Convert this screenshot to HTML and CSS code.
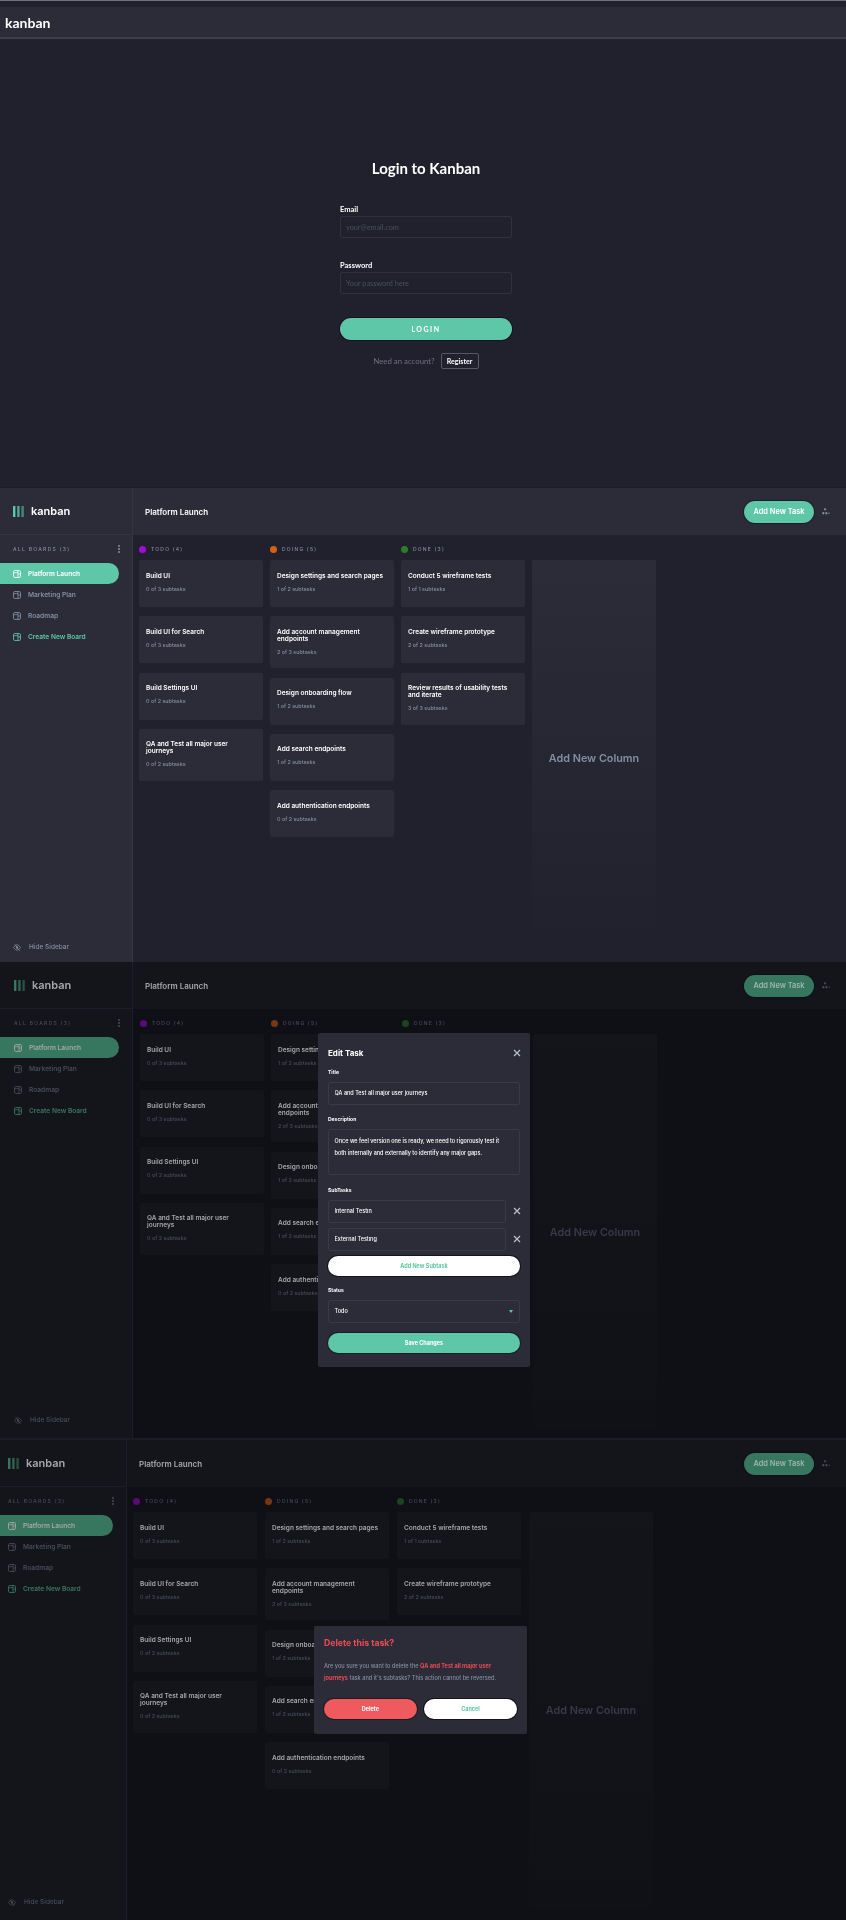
FILE: index.html
```html
<!DOCTYPE html>
<html lang="en">
<head>
  <meta charset="UTF-8">
  <meta name="viewport" content="width=device-width, initial-scale=1">
  <title>Kanban</title>
  <link rel="stylesheet" href="styles.css">
</head>
<body>
  <svg class="defs" width="0" height="0">
    <symbol id="board-icon" viewBox="0 0 9 9">
      <rect x=".6" y=".6" width="7.8" height="7.8" rx="1.4" fill="none" stroke="currentColor" stroke-width="1"/>
      <path d="M5.600 .6v7.800M5.600 4.500h2.800M.6 3h5" fill="none" stroke="currentColor" stroke-width=".9"/>
    </symbol>
    <symbol id="logo-bars" viewBox="0 0 11 11">
      <rect width="2.400" height="11" rx=".3" fill="currentColor"/>
      <rect x="4.200" width="2.400" height="11" rx=".3" fill="currentColor" opacity=".8"/>
      <rect x="8.400" width="2.400" height="11" rx=".3" fill="currentColor" opacity=".6"/>
    </symbol>
    <symbol id="hide-icon" viewBox="0 0 9 8">
      <path d="M.5 4C2 1.800 3.200 1 4.500 1S7 1.800 8.500 4C7 6.200 5.800 7 4.500 7S2 6.200 .5 4Z" fill="none" stroke="currentColor" stroke-width=".9"/>
      <circle cx="4.500" cy="4" r="1.300" fill="currentColor"/>
      <path d="M1.800 .4l5.600 7.200" stroke="currentColor" stroke-width=".9"/>
    </symbol>
    <symbol id="user-icon" viewBox="0 0 9 8">
      <circle cx="3.400" cy="1.500" r="1.300" fill="currentColor"/>
      <circle cx="1.400" cy="6" r="1.300" fill="currentColor"/>
      <circle cx="4.900" cy="6" r="1.300" fill="currentColor"/>
      <circle cx="8" cy="6" r=".8" fill="currentColor"/>
    </symbol>
    <symbol id="close-icon" viewBox="0 0 8 8">
      <path d="M1 1l6 6M7 1L1 7" fill="none" stroke="currentColor" stroke-width="1.200"/>
    </symbol>
  </svg>

  <!-- login -->
  <section class="login">
    <header class="login-bar"><span class="login-logo">kanban</span></header>
    <div class="login-body">
      <h1 class="login-title">Login to Kanban</h1>
      <label class="login-label">Email</label>
      <input class="login-input" type="text" placeholder="your@email.com">
      <label class="login-label login-label-next">Password</label>
      <input class="login-input" type="text" placeholder="Your password here">
      <button class="login-btn">LOGIN</button>
      <div class="login-foot">
        <span>Need an account?</span>
        <button class="register-btn">Register</button>
      </div>
    </div>
  </section>

  <!-- board -->
  <section class="board board-plain">
    <aside class="sidebar">
      <div class="brand"><svg class="brand-bars"><use href="#logo-bars"/></svg><span>kanban</span></div>
      <div class="boards-head"><span>ALL BOARDS (3)</span><i class="dots"></i></div>
      <nav class="boards">
        <a class="board-link active"><svg><use href="#board-icon"/></svg>Platform Launch</a>
        <a class="board-link"><svg><use href="#board-icon"/></svg>Marketing Plan</a>
        <a class="board-link"><svg><use href="#board-icon"/></svg>Roadmap</a>
        <a class="board-link create"><svg><use href="#board-icon"/></svg>Create New Board</a>
      </nav>
      <a class="hide-link"><svg><use href="#hide-icon"/></svg>Hide Sidebar</a>
    </aside>
    <div class="main">
      <header class="topbar">
        <h2>Platform Launch</h2>
        <button class="add-task">Add New Task</button>
        <svg class="user-icon"><use href="#user-icon"/></svg>
      </header>
      <div class="columns">
        <div class="column">
          <h3 class="column-head"><i class="dot todo"></i>TODO (4)</h3>
          <div class="card"><h4>Build UI</h4><p>0 of 3 subtasks</p></div>
          <div class="card"><h4>Build UI for Search</h4><p>0 of 3 subtasks</p></div>
          <div class="card"><h4>Build Settings UI</h4><p>0 of 2 subtasks</p></div>
          <div class="card"><h4>QA and Test all major user journeys</h4><p>0 of 2 subtasks</p></div>
        </div>
        <div class="column">
          <h3 class="column-head"><i class="dot doing"></i>DOING (5)</h3>
          <div class="card"><h4>Design settings and search pages</h4><p>1 of 2 subtasks</p></div>
          <div class="card"><h4>Add account management endpoints</h4><p>2 of 3 subtasks</p></div>
          <div class="card"><h4>Design onboarding flow</h4><p>1 of 2 subtasks</p></div>
          <div class="card"><h4>Add search endpoints</h4><p>1 of 2 subtasks</p></div>
          <div class="card"><h4>Add authentication endpoints</h4><p>0 of 2 subtasks</p></div>
        </div>
        <div class="column">
          <h3 class="column-head"><i class="dot done"></i>DONE (3)</h3>
          <div class="card"><h4>Conduct 5 wireframe tests</h4><p>1 of 1 subtasks</p></div>
          <div class="card"><h4>Create wireframe prototype</h4><p>2 of 2 subtasks</p></div>
          <div class="card"><h4>Review results of usability tests and iterate</h4><p>3 of 3 subtasks</p></div>
        </div>
        <div class="add-column">Add New Column</div>
      </div>
    </div>
  </section>

  <!-- edit task modal -->
  <section class="board board-edit dim">
    <aside class="sidebar">
      <div class="brand"><svg class="brand-bars"><use href="#logo-bars"/></svg><span>kanban</span></div>
      <div class="boards-head"><span>ALL BOARDS (3)</span><i class="dots"></i></div>
      <nav class="boards">
        <a class="board-link active"><svg><use href="#board-icon"/></svg>Platform Launch</a>
        <a class="board-link"><svg><use href="#board-icon"/></svg>Marketing Plan</a>
        <a class="board-link"><svg><use href="#board-icon"/></svg>Roadmap</a>
        <a class="board-link create"><svg><use href="#board-icon"/></svg>Create New Board</a>
      </nav>
      <a class="hide-link"><svg><use href="#hide-icon"/></svg>Hide Sidebar</a>
    </aside>
    <div class="main">
      <header class="topbar">
        <h2>Platform Launch</h2>
        <button class="add-task">Add New Task</button>
        <svg class="user-icon"><use href="#user-icon"/></svg>
      </header>
      <div class="columns">
        <div class="column">
          <h3 class="column-head"><i class="dot todo"></i>TODO (4)</h3>
          <div class="card"><h4>Build UI</h4><p>0 of 3 subtasks</p></div>
          <div class="card"><h4>Build UI for Search</h4><p>0 of 3 subtasks</p></div>
          <div class="card"><h4>Build Settings UI</h4><p>0 of 2 subtasks</p></div>
          <div class="card"><h4>QA and Test all major user journeys</h4><p>0 of 2 subtasks</p></div>
        </div>
        <div class="column">
          <h3 class="column-head"><i class="dot doing"></i>DOING (5)</h3>
          <div class="card"><h4>Design settings and search pages</h4><p>1 of 2 subtasks</p></div>
          <div class="card"><h4>Add account management endpoints</h4><p>2 of 3 subtasks</p></div>
          <div class="card"><h4>Design onboarding flow</h4><p>1 of 2 subtasks</p></div>
          <div class="card"><h4>Add search endpoints</h4><p>1 of 2 subtasks</p></div>
          <div class="card"><h4>Add authentication endpoints</h4><p>0 of 2 subtasks</p></div>
        </div>
        <div class="column">
          <h3 class="column-head"><i class="dot done"></i>DONE (3)</h3>
        </div>
        <div class="add-column">Add New Column</div>
      </div>
    </div>
    <form class="modal edit-modal">
      <div class="modal-head">
        <h3>Edit Task</h3>
        <svg class="close"><use href="#close-icon"/></svg>
      </div>
      <label class="field-label">Title</label>
      <input class="field" type="text" value="QA and Test all major user journeys">
      <label class="field-label">Description</label>
      <textarea class="field field-area">Once we feel version one is ready, we need to rigorously test it
both internally and externally to identify any major gaps.</textarea>
      <label class="field-label">SubTasks</label>
      <div class="subtask">
        <input class="field" type="text" value="Internal Testin">
        <svg class="close"><use href="#close-icon"/></svg>
      </div>
      <div class="subtask">
        <input class="field" type="text" value="External Testing">
        <svg class="close"><use href="#close-icon"/></svg>
      </div>
      <button class="pill pill-white" type="button">Add New Subtask</button>
      <label class="field-label">Status</label>
      <div class="select">
        <span>Todo</span>
        <i class="chevron"></i>
      </div>
      <button class="pill pill-green" type="button">Save Changes</button>
    </form>
  </section>

  <!-- delete task modal -->
  <section class="board board-delete dim">
    <aside class="sidebar">
      <div class="brand"><svg class="brand-bars"><use href="#logo-bars"/></svg><span>kanban</span></div>
      <div class="boards-head"><span>ALL BOARDS (3)</span><i class="dots"></i></div>
      <nav class="boards">
        <a class="board-link active"><svg><use href="#board-icon"/></svg>Platform Launch</a>
        <a class="board-link"><svg><use href="#board-icon"/></svg>Marketing Plan</a>
        <a class="board-link"><svg><use href="#board-icon"/></svg>Roadmap</a>
        <a class="board-link create"><svg><use href="#board-icon"/></svg>Create New Board</a>
      </nav>
      <a class="hide-link"><svg><use href="#hide-icon"/></svg>Hide Sidebar</a>
    </aside>
    <div class="main">
      <header class="topbar">
        <h2>Platform Launch</h2>
        <button class="add-task">Add New Task</button>
        <svg class="user-icon"><use href="#user-icon"/></svg>
      </header>
      <div class="columns">
        <div class="column">
          <h3 class="column-head"><i class="dot todo"></i>TODO (4)</h3>
          <div class="card"><h4>Build UI</h4><p>0 of 3 subtasks</p></div>
          <div class="card"><h4>Build UI for Search</h4><p>0 of 3 subtasks</p></div>
          <div class="card"><h4>Build Settings UI</h4><p>0 of 2 subtasks</p></div>
          <div class="card"><h4>QA and Test all major user journeys</h4><p>0 of 2 subtasks</p></div>
        </div>
        <div class="column">
          <h3 class="column-head"><i class="dot doing"></i>DOING (5)</h3>
          <div class="card"><h4>Design settings and search pages</h4><p>1 of 2 subtasks</p></div>
          <div class="card"><h4>Add account management endpoints</h4><p>2 of 3 subtasks</p></div>
          <div class="card"><h4>Design onboarding flow</h4><p>1 of 2 subtasks</p></div>
          <div class="card"><h4>Add search endpoints</h4><p>1 of 2 subtasks</p></div>
          <div class="card"><h4>Add authentication endpoints</h4><p>0 of 2 subtasks</p></div>
        </div>
        <div class="column">
          <h3 class="column-head"><i class="dot done"></i>DONE (3)</h3>
          <div class="card"><h4>Conduct 5 wireframe tests</h4><p>1 of 1 subtasks</p></div>
          <div class="card"><h4>Create wireframe prototype</h4><p>2 of 2 subtasks</p></div>
        </div>
        <div class="add-column">Add New Column</div>
      </div>
    </div>
    <div class="modal delete-modal">
      <h3>Delete this task?</h3>
      <p>Are you sure you want to delete the <b>QA and Test all major user<br>journeys</b> task and it's subtasks? This action cannot be reversed.</p>
      <div class="delete-actions">
        <button class="pill pill-red" type="button">Delete</button>
        <button class="pill pill-white" type="button">Cancel</button>
      </div>
    </div>
  </section>
</body>
</html>
```

FILE: styles.css
```css
* {
  margin: 0;
  padding: 0;
  box-sizing: border-box;
}

html, body {
  background: #1b1c24;
}

body {
  width: 846px;
  height: 1920px;
  overflow: hidden;
  font-family: "Inter", "Liberation Sans", sans-serif;
  color: #fff;
  filter: blur(.35px);
}

.defs {
  position: absolute;
}

button {
  font-family: inherit;
  border: none;
}

/* login */
.login {
  height: 487px;
  padding-top: 1px;
  border-top: 1px solid #70717a;
  background: #20212c;
}

.login-bar {
  height: 32px;
  margin-top: 5px;
  display: flex;
  align-items: center;
  padding-left: 5px;
  background: #2b2c37;
  border-bottom: 2px solid #3e3f4e;
}

.login-logo {
  font-family: "Lato", sans-serif;
  font-size: 14px;
  font-weight: 700;
}

.login-body {
  width: 172px;
  margin-left: 340px;
  padding-top: 120px;
  display: flex;
  flex-direction: column;
  font-family: "Lato", sans-serif;
}

.login-title {
  height: 18px;
  margin-bottom: 29px;
  font-size: 15px;
  line-height: 18px;
  font-weight: 700;
  text-align: center;
}

.login-label {
  height: 8px;
  margin-bottom: 2px;
  font-size: 7.500px;
  line-height: 8px;
  font-weight: 700;
}

.login-label-next {
  margin-top: 24px;
}

.login-input {
  height: 22px;
  padding: 0 5px;
  background: transparent;
  border: 1px solid #30313e;
  border-radius: 2px;
  font-family: inherit;
  font-size: 7.300px;
}

.login-input::placeholder {
  color: #4b4e5d;
}

.login-btn {
  height: 22px;
  margin-top: 24px;
  border-radius: 11px;
  background: #5ec7a7;
  color: #fff;
  font-size: 7px;
  font-weight: 700;
  letter-spacing: 1.500px;
  box-shadow: 0 0 0 1px #17101f;
}

.login-foot {
  margin-top: 13px;
  display: flex;
  justify-content: center;
  align-items: center;
  gap: 6px;
  font-size: 7.800px;
  color: #6a7085;
}

.register-btn {
  height: 16px;
  width: 38px;
  background: transparent;
  border: 1px solid #555766;
  border-radius: 2px;
  color: #fff;
  font-size: 7px;
  font-family: "Lato", sans-serif;
  font-weight: 700;
}

/* board */
.board {
  --side: #2b2c37;
  --page: #20212c;
  --line: #343541;
  --card: #2b2c37;
  --text: #fff;
  --muted: #828fa3;
  --green: #5ec7a7;
  --pill-text: #fff;
  --todo: #a20bdc;
  --doing: #d86011;
  --done: #2f7a2d;
  --add-top: #2b2c37;
  --add-bottom: #20212c;
  --add-text: #828fa3;
  --side-w: 133px;
  --side-pad: 13px;
  --pill-w: 119px;
  --col-gap: 7px;
  --col-left: 6px;
  --head-h: 47px;
  --hide-bottom: 11px;
  position: relative;
  display: flex;
}

.dim {
  --side: #14151b;
  --page: #0f1015;
  --line: #1d1e25;
  --card: #14151b;
  --text: #a6a6a8;
  --muted: #474b57;
  --green: #38775f;
  --pill-text: #9fb5ab;
  --todo: #5a0a7a;
  --doing: #77380f;
  --done: #1c4420;
  --add-top: #14151b;
  --add-bottom: #101116;
  --add-text: #383a45;
}

.board-plain {
  height: 475px;
  padding-top: 1px;
}

.board-edit {
  height: 476px;
  --side-pad: 14px;
  --col-left: 7px;
  --hide-bottom: 14px;
}

.board-delete {
  height: 482px;
  padding-top: 2px;
  --side-w: 127px;
  --side-pad: 8px;
  --pill-w: 113px;
  --col-gap: 8px;
  --hide-bottom: 14px;
}

.sidebar {
  width: var(--side-w);
  flex-shrink: 0;
  display: flex;
  flex-direction: column;
  background: var(--side);
  border-right: 1px solid var(--line);
  color: var(--muted);
}

.brand {
  height: var(--head-h);
  flex-shrink: 0;
  display: flex;
  align-items: center;
  gap: 7px;
  padding-left: var(--side-pad);
  border-bottom: 1px solid var(--line);
  color: var(--text);
  font-size: 11px;
  font-weight: 600;
}

.brand-bars {
  width: 11px;
  height: 11px;
  color: var(--green);
}

.boards-head {
  height: 10px;
  margin-top: 9px;
  padding: 0 12px 0 var(--side-pad);
  display: flex;
  justify-content: space-between;
  align-items: center;
  font-size: 5px;
  font-weight: 500;
  letter-spacing: 1.300px;
}

.dots {
  width: 2px;
  height: 2px;
  border-radius: 50%;
  background: currentColor;
  box-shadow: 0 -3px 0 currentColor, 0 3px 0 currentColor;
}

.boards {
  margin-top: 9px;
  display: flex;
  flex-direction: column;
  gap: .33px;
}

.board-link {
  width: var(--pill-w);
  height: 21px;
  padding-left: var(--side-pad);
  display: flex;
  align-items: center;
  gap: 7px;
  border-radius: 0 11px 11px 0;
  font-size: 6.600px;
  font-weight: 600;
}

.board-link svg {
  width: 8px;
  height: 8px;
}

.board-link.active {
  background: var(--green);
  color: var(--text);
}

.board-link.create {
  color: var(--green);
}

.hide-link {
  margin-top: auto;
  margin-bottom: var(--hide-bottom);
  padding-left: var(--side-pad);
  display: flex;
  align-items: center;
  gap: 8px;
  font-size: 6.500px;
  font-weight: 500;
}

.hide-link svg {
  width: 8px;
  height: 7px;
}

.main {
  flex: 1;
  min-width: 0;
  display: flex;
  flex-direction: column;
  background: var(--page);
}

.topbar {
  height: var(--head-h);
  flex-shrink: 0;
  padding: 0 16px 0 12px;
  display: flex;
  align-items: center;
  background: var(--side);
  color: var(--text);
}

.topbar h2 {
  flex: 1;
  font-size: 8px;
  font-weight: 600;
}

.add-task {
  width: 70px;
  height: 22px;
  border-radius: 11px;
  background: var(--green);
  color: var(--pill-text);
  font-size: 7.400px;
  font-weight: 600;
  box-shadow: 0 0 0 1px rgba(10, 8, 20, .45);
}

.user-icon {
  width: 8px;
  height: 7px;
  margin-left: 8px;
  color: var(--muted);
}

.columns {
  flex: 1;
  padding: 9px 0 0 var(--col-left);
  display: flex;
  gap: var(--col-gap);
}

.column {
  width: 124px;
  display: flex;
  flex-direction: column;
  gap: 9.300px;
}

.column-head {
  height: 10px;
  margin-bottom: -3.300px;
  display: flex;
  align-items: center;
  gap: 5px;
  color: var(--muted);
  font-size: 5px;
  font-weight: 500;
  letter-spacing: 1.200px;
}

.dot {
  width: 7px;
  height: 7px;
  border-radius: 50%;
}

.todo { background: var(--todo); }
.doing { background: var(--doing); }
.done { background: var(--done); }

.card {
  min-height: 47px;
  padding: 12.500px 7px;
  border-radius: 2px;
  background: var(--card);
}

.card h4 {
  font-size: 6.500px;
  line-height: 7px;
  font-weight: 600;
  color: var(--text);
}

.card p {
  margin-top: 6px;
  font-size: 5.400px;
  line-height: 7px;
  font-weight: 500;
  color: var(--muted);
}

.add-column {
  width: 124px;
  height: 396px;
  margin-top: 16px;
  display: flex;
  align-items: center;
  justify-content: center;
  border-radius: 2px;
  background: linear-gradient(var(--add-top), var(--add-bottom));
  color: var(--add-text);
  font-size: 10.800px;
  font-weight: 600;
}

/* modals */
.modal {
  position: absolute;
  background: #2b2c37;
  border-radius: 2px;
  display: flex;
  flex-direction: column;
}

.edit-modal {
  left: 318px;
  top: 71px;
  width: 212px;
  height: 334px;
  padding: 0 10px;
}

.modal-head {
  height: 25px;
  margin-top: 7px;
  display: flex;
  align-items: center;
  justify-content: space-between;
}

.modal-head h3 {
  font-size: 8px;
  font-weight: 700;
}

.close {
  width: 8px;
  height: 8px;
  margin-right: -1px;
  color: #b8c0cf;
}

.field-label {
  height: 7px;
  margin-top: 3.500px;
  margin-bottom: 6px;
  font-size: 5px;
  line-height: 7px;
  font-weight: 700;
}

.field {
  display: block;
  width: 100%;
  height: 23px;
  margin-bottom: 8px;
  padding: 0 5.500px;
  background: transparent;
  border: 1px solid #393a47;
  border-radius: 2px;
  color: #fff;
  font-family: inherit;
  font-size: 5.500px;
  font-weight: 500;
  outline: none;
  resize: none;
}

.field-area {
  height: 46px;
  padding: 6px 5.500px;
  line-height: 11.500px;
}

.subtask {
  display: flex;
  align-items: center;
  gap: 7px;
  margin-bottom: 5px;
}

.subtask .field {
  width: 178px;
  margin: 0;
}

.pill {
  height: 20px;
  flex-shrink: 0;
  border-radius: 10px;
  font-size: 5.500px;
  font-weight: 700;
}

.pill-white {
  background: #fff;
  color: #5ec7a7;
  box-shadow: 0 0 0 1px #14131d;
}

.pill-green {
  background: #5ec7a7;
  color: #fff;
  box-shadow: 0 0 0 1px #1c1c26;
}

.pill-red {
  background: #ef5a5f;
  color: #fff;
  box-shadow: 0 0 0 1px #1c1c26;
}

.edit-modal .pill-white {
  margin-bottom: 7.500px;
}

.select {
  height: 23px;
  flex-shrink: 0;
  margin-bottom: 10.500px;
  padding: 0 5.500px;
  display: flex;
  align-items: center;
  justify-content: space-between;
  border: 1px solid #393a47;
  border-radius: 2px;
  font-size: 5.500px;
  font-weight: 500;
}

.chevron {
  width: 0;
  height: 0;
  margin-right: 1px;
  border-left: 2.500px solid transparent;
  border-right: 2.500px solid transparent;
  border-top: 3px solid #5ec7a7;
}

.delete-modal {
  left: 314px;
  top: 188px;
  width: 213px;
  height: 108px;
  padding: 11px 10px 0;
}

.delete-modal h3 {
  height: 12px;
  font-size: 8.700px;
  line-height: 12px;
  font-weight: 700;
  color: #ea4a55;
}

.delete-modal p {
  margin-top: 12px;
  font-size: 5.600px;
  line-height: 11.700px;
  font-weight: 500;
  color: #828fa3;
}

.delete-modal b {
  color: #ea4a55;
  font-weight: 700;
}

.delete-actions {
  margin-top: 15px;
  display: flex;
  gap: 7px;
}

.delete-actions .pill {
  flex: 1;
}
```
